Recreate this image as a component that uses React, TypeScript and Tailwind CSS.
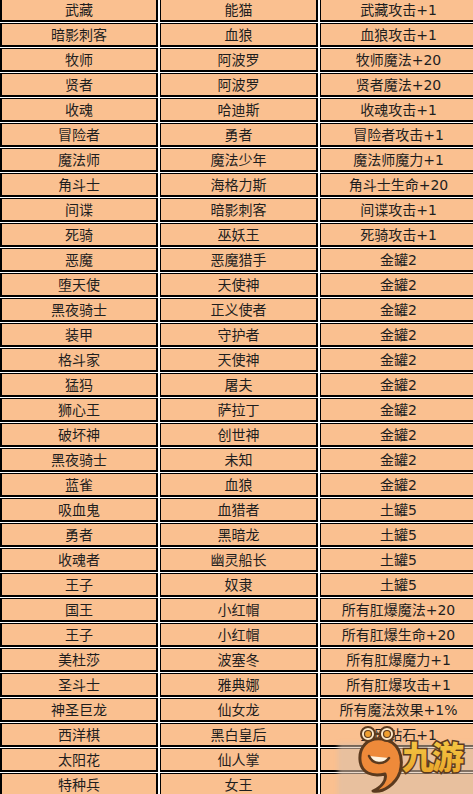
import React from "react";

const rows: [string, string, string][] = [
  ["武藏", "能猫", "武藏攻击+1"],
  ["暗影刺客", "血狼", "血狼攻击+1"],
  ["牧师", "阿波罗", "牧师魔法+20"],
  ["贤者", "阿波罗", "贤者魔法+20"],
  ["收魂", "哈迪斯", "收魂攻击+1"],
  ["冒险者", "勇者", "冒险者攻击+1"],
  ["魔法师", "魔法少年", "魔法师魔力+1"],
  ["角斗士", "海格力斯", "角斗士生命+20"],
  ["间谍", "暗影刺客", "间谍攻击+1"],
  ["死骑", "巫妖王", "死骑攻击+1"],
  ["恶魔", "恶魔猎手", "金罐2"],
  ["堕天使", "天使神", "金罐2"],
  ["黑夜骑士", "正义使者", "金罐2"],
  ["装甲", "守护者", "金罐2"],
  ["格斗家", "天使神", "金罐2"],
  ["猛犸", "屠夫", "金罐2"],
  ["狮心王", "萨拉丁", "金罐2"],
  ["破坏神", "创世神", "金罐2"],
  ["黑夜骑士", "未知", "金罐2"],
  ["蓝雀", "血狼", "金罐2"],
  ["吸血鬼", "血猎者", "土罐5"],
  ["勇者", "黑暗龙", "土罐5"],
  ["收魂者", "幽灵船长", "土罐5"],
  ["王子", "奴隶", "土罐5"],
  ["国王", "小红帽", "所有肛爆魔法+20"],
  ["王子", "小红帽", "所有肛爆生命+20"],
  ["美杜莎", "波塞冬", "所有肛爆魔力+1"],
  ["圣斗士", "雅典娜", "所有肛爆攻击+1"],
  ["神圣巨龙", "仙女龙", "所有魔法效果+1%"],
  ["西洋棋", "黑白皇后", "金刚钻石+1"],
  ["太阳花", "仙人掌", ""],
  ["特种兵", "女王", ""],
];

function Cell({ text, first }: { text: string; first?: boolean }) {
  return (
    <div
      className={`h-[24px] flex items-center justify-center bg-[#fac090] border-black border-t border-r-2 border-b-2 ${
        first ? "border-l-2" : "border-l"
      } text-[14px] text-[#1e1e1e] leading-none`}
    >
      {text}
    </div>
  );
}

function Watermark() {
  return (
    <div className="absolute left-[338px] top-[722px] w-[140px] h-[80px] pointer-events-none">
      <div className="absolute left-0 top-[21px] w-[140px] h-[60px] bg-[#dcc0a8]/60 blur-[2px]" />
      <svg width="140" height="76" viewBox="0 0 140 76" className="absolute left-0 top-0">
        <defs>
          <linearGradient id="yg" x1="0" y1="0" x2="0" y2="1">
            <stop offset="0" stopColor="#f7cf4a" />
            <stop offset="1" stopColor="#e8a228" />
          </linearGradient>
        </defs>
        <path
          d="M44 17 C29 15 21 26 22 38 C23 51 34 55 47 52 C49 58 44 65 35 69 C45 71 58 62 62 50 C66 35 61 19 44 17 Z"
          fill="#ee8a3a"
          stroke="#5b3a1e"
          strokeWidth="3"
          strokeLinejoin="round"
        />
        <path d="M31 34 C35 43 46 43 51 36" fill="#fff4e0" stroke="#5b3a1e" strokeWidth="2.5" strokeLinecap="round" />
        <circle cx="30" cy="12" r="7" fill="#fde8c8" stroke="#5b3a1e" strokeWidth="2" />
        <circle cx="30" cy="12" r="3.5" fill="#f0a030" stroke="#5b3a1e" strokeWidth="1.2" />
        <circle cx="49" cy="12" r="7" fill="#fde8c8" stroke="#5b3a1e" strokeWidth="2" />
        <circle cx="49" cy="12" r="3.5" fill="#f0a030" stroke="#5b3a1e" strokeWidth="1.2" />
        <path d="M37 12 L42 12" stroke="#5b3a1e" strokeWidth="2" />
        <text
          x="64"
          y="47"
          fontFamily="'Noto Sans CJK SC', sans-serif"
          fontWeight="900"
          fontSize="32"
          fill="url(#yg)"
          stroke="#5b3a1e"
          strokeWidth="3"
          paintOrder="stroke"
          letterSpacing="-2"
        >
          九游
        </text>
      </svg>
    </div>
  );
}

export default function App() {
  return (
    <div
      className="relative w-[473px] h-[794px] overflow-hidden bg-white"
      style={{ fontFamily: "'DejaVu Sans', 'Noto Sans CJK SC', sans-serif" }}
    >
      <div className="-mt-[2px] grid grid-cols-[158px_158px_158px] gap-x-[2px] gap-y-[1px] w-[478px]">
        {rows.map((r, i) => (
          <React.Fragment key={i}>
            <Cell text={r[0]} first />
            <Cell text={r[1]} />
            <Cell text={r[2]} />
          </React.Fragment>
        ))}
      </div>
      <Watermark />
    </div>
  );
}
